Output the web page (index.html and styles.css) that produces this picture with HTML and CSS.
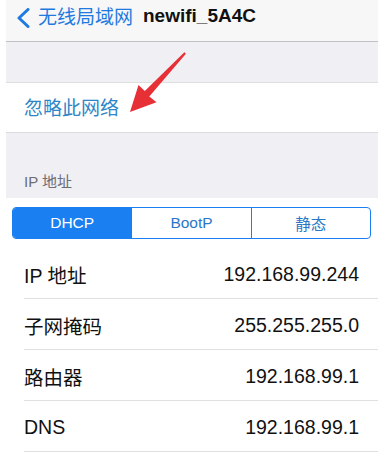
FILE: index.html
```html
<!DOCTYPE html>
<html lang="zh">
<head>
<meta charset="utf-8">
<title>newifi_5A4C</title>
<link rel="stylesheet" href="styles.css">
</head>
<body>
<div class="screen">
  <header class="nav">
    <svg class="chev" width="14" height="20" viewBox="0 0 14 20"><polyline points="12,1.5 3,10 12,18.5" fill="none" stroke="#1f7ae0" stroke-width="3" stroke-linecap="round" stroke-linejoin="round"/></svg>
    <span class="back">无线局域网</span>
    <span class="title">newifi_5A4C</span>
  </header>
  <div class="gap"></div>
  <div class="cell action">忽略此网络</div>
  <div class="section-header">IP 地址</div>
  <div class="seg-wrap">
    <div class="seg">
      <span class="seg-item on">DHCP</span>
      <span class="seg-item">BootP</span>
      <span class="seg-item">静态</span>
    </div>
  </div>
  <ul class="list">
    <li class="row"><span class="label">IP 地址</span><span class="value">192.168.99.244</span></li>
    <li class="row"><span class="label">子网掩码</span><span class="value">255.255.255.0</span></li>
    <li class="row"><span class="label">路由器</span><span class="value">192.168.99.1</span></li>
    <li class="row"><span class="label">DNS</span><span class="value">192.168.99.1</span></li>
  </ul>
</div>
<svg class="arrow" width="392" height="463" viewBox="0 0 392 463">
  <polygon points="130,112 138.5,85 144.8,91 184.4,52.3 185.9,53.8 149.3,96.4 156.5,102.3" fill="#e63036"/>
</svg>
</body>
</html>
```

FILE: styles.css
```css
* { box-sizing: border-box; }
html, body {
  margin: 0;
  padding: 0;
  background: #ffffff;
}
body {
  position: relative;
  width: 392px;
  height: 463px;
  overflow: hidden;
  font-family: "Liberation Sans", "Noto Sans CJK SC", sans-serif;
  color: #111;
}
.screen {
  margin-left: 6px;
  width: 372px;
  background: #ffffff;
}
.nav {
  height: 42px;
  background: #f7f7f7;
  border-bottom: 1px solid #c2c2c6;
  display: flex;
  align-items: flex-start;
  padding: 5px 0 0 10px;
}
.chev {
  display: block;
  margin-top: 3px;
  margin-right: 8px;
  flex: none;
}
.back {
  font-size: 19px;
  line-height: 22px;
  color: #1f7ae0;
  font-family: "Noto Sans CJK SC", sans-serif;
  margin-right: 10px;
}
.title {
  font-size: 19px;
  line-height: 22px;
  font-weight: bold;
  color: #111;
}
.gap {
  height: 41px;
  background: #efeff4;
  border-bottom: 1px solid #dededf;
}
.cell {
  height: 50px;
  background: #fff;
  border-bottom: 1px solid #dcdce0;
  display: flex;
  align-items: center;
  padding-left: 18px;
}
.action {
  font-size: 19px;
  color: #2f86c6;
  font-family: "Noto Sans CJK SC", sans-serif;
  padding-bottom: 2px;
}
.section-header {
  height: 65px;
  background: #efeff4;
  padding: 39px 0 0 18px;
  font-size: 15px;
  line-height: 20px;
  color: #6d6d72;
}
.seg-wrap {
  padding: 9px 7px 9px 6px;
}
.seg {
  display: flex;
  height: 32px;
  border: 1px solid #1a7ff0;
  border-radius: 4px;
  overflow: hidden;
}
.seg-item {
  flex: 1;
  display: flex;
  align-items: center;
  justify-content: center;
  font-size: 15.5px;
  color: #2a78c8;
  border-left: 1px solid #1a7ff0;
}
.seg-item:first-child { border-left: none; }
.seg-item.on {
  background: #1a7ff0;
  color: #fff;
}
.list {
  list-style: none;
  margin: 0;
  padding: 0;
}
.row {
  margin-left: 18px;
  height: 51px;
  border-bottom: 1px solid #e0e0e2;
  display: flex;
  align-items: center;
  justify-content: space-between;
  padding: 3px 19px 0 0;
  font-size: 19.5px;
  color: #111;
}
.arrow {
  position: absolute;
  left: 0;
  top: 0;
  pointer-events: none;
}
```
